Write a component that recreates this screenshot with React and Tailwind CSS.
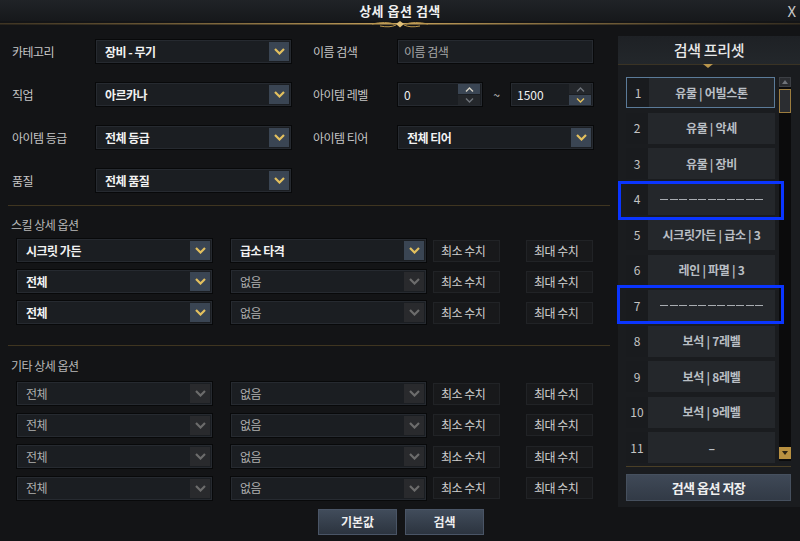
import React from "react";

const Chev = ({ color = "#e3c05e", up = false, small = false }) =>
  small ? (
    <svg width="9" height="5" viewBox="0 0 9 5">
      <path d={up ? "M1 4.5 L4.5 1 L8 4.5" : "M1 0.5 L4.5 4 L8 0.5"} fill="none" stroke={color} strokeWidth="1.4" />
    </svg>
  ) : (
    <svg width="11" height="7" viewBox="0 0 11 7">
      <path d={up ? "M1 6 L5.5 1.5 L10 6" : "M1 1 L5.5 5.5 L10 1"} fill="none" stroke={color} strokeWidth="2.2" />
    </svg>
  );

function Select({ text, active, bold }) {
  return (
    <div className="flex h-[23px] w-[195px] shrink-0 items-center justify-between border border-[#262a30] bg-[#1b1e22] pl-[8px] pr-[1px] shadow-[0_0_0_1px_#08090a]">
      <span className={bold ? "text-[12px] font-bold tracking-[-0.5px] text-[#f2f2f2]" : "text-[12px] tracking-[-0.5px] text-[#b0b0b0]"}>{text}</span>
      <div className={active ? "flex h-[19px] w-[20px] items-center justify-center bg-[#3a4553]" : "flex h-[19px] w-[20px] items-center justify-center bg-[#292a2d]"}>
        <Chev color={active ? "#e3c05e" : "#6c6c6c"} />
      </div>
    </div>
  );
}

function Spin({ value, wide, hl }) {
  return (
    <div className={(wide ? "w-[84px]" : "w-[82px]") + " flex h-[23px] items-center justify-between border border-[#262a30] bg-[#1b1e22] pl-[5px] pr-[1px] shadow-[0_0_0_1px_#08090a]"}>
      <span className="text-[12px] text-[#f0f0f0]">{value}</span>
      <div className="flex h-[21px] w-[22px] flex-col gap-[1px]">
        <div className={hl === "up" ? "flex flex-1 items-center justify-center bg-[#3a4553]" : "flex flex-1 items-center justify-center bg-[#24272b]"}>
          <Chev small up color={hl === "up" ? "#d6d2c4" : "#6e737a"} />
        </div>
        <div className={hl === "down" ? "flex flex-1 items-center justify-center bg-[#3a4553]" : "flex flex-1 items-center justify-center bg-[#24272b]"}>
          <Chev small color={hl === "down" ? "#e3c05e" : "#6e737a"} />
        </div>
      </div>
    </div>
  );
}

const Label = ({ children }) => <div className="text-[12px] tracking-[-0.5px] text-[#c6c6c6]">{children}</div>;

const Box = ({ children, ml }) => (
  <div className={ml + " flex h-[22px] w-[67px] shrink-0 items-center border border-[#212326] bg-[#18191b] pl-[7px] text-[12px] tracking-[-0.5px] text-[#cfcfcf]"}>
    {children}
  </div>
);

function OptRow({ a, b, aActive = false, bActive = false }) {
  return (
    <div className="flex items-center pl-[17px]">
      <Select text={a} active={aActive} bold={aActive} />
      <div className="ml-[19px]">
        <Select text={b} active={bActive} bold={bActive} />
      </div>
      <Box ml="ml-[7px]">최소 수치</Box>
      <Box ml="ml-[26px]">최대 수치</Box>
    </div>
  );
}

const presets = [
  "유물 | 어빌스톤",
  "유물 | 악세",
  "유물 | 장비",
  "DASH",
  "시크릿가든 | 급소 | 3",
  "레인 | 파멸 | 3",
  "DASH",
  "보석 | 7레벨",
  "보석 | 8레벨",
  "보석 | 9레벨",
  "–",
];

const Divider = () => <div className="mx-[8px] h-px bg-[#3f3520]" />;

export default function App() {
  return (
    <div className="relative h-[541px] w-[800px] overflow-hidden bg-[#131416] font-['Noto_Sans_CJK_KR','Noto_Sans',sans-serif]">
      {/* title bar */}
      <div className="relative flex h-[21px] items-center justify-center bg-gradient-to-b from-[#202327] to-[#16181b]">
        <span className="text-[13px] font-bold tracking-[0.5px] text-[#f0f0f0]">상세 옵션 검색</span>
        <span className="absolute right-[4px] top-[0px] text-[15px] text-[#c8c8c8]">X</span>
      </div>
      <svg width="800" height="8" viewBox="0 0 800 8" className="block">
        <defs>
          <linearGradient id="gl" x1="0" x2="1" y1="0" y2="0">
            <stop offset="0" stopColor="#6a5530" stopOpacity="0.5" />
            <stop offset="0.5" stopColor="#c9a45c" />
            <stop offset="1" stopColor="#6a5530" stopOpacity="0.4" />
          </linearGradient>
        </defs>
        <rect x="0" y="2" width="800" height="1.5" fill="url(#gl)" />
        <path d="M372 3 Q386 0 394 3 M428 3 Q414 0 406 3 M380 5 Q390 7 396 4 M420 5 Q410 7 404 4" stroke="#b8954c" strokeWidth="1" fill="none" />
        <path d="M400 0 L404 3 L400 6.5 L396 3 Z" fill="#e0c078" />
      </svg>

      <div className="flex">
        {/* left column */}
        <div className="w-[618px] shrink-0">
          <div className="mt-[11px] grid grid-cols-[84px_195px_22px_85px_195px] items-center gap-y-[20px] pl-[12px]">
            <Label>카테고리</Label>
            <Select text="장비 - 무기" active bold />
            <div />
            <Label>이름 검색</Label>
            <div className="flex h-[23px] w-[195px] items-center border border-[#262a30] bg-[#1b1e22] pl-[5px] text-[12px] tracking-[-0.5px] text-[#a8a8a8] shadow-[0_0_0_1px_#08090a]">
              이름 검색
            </div>

            <Label>직업</Label>
            <Select text="아르카나" active bold />
            <div />
            <Label>아이템 레벨</Label>
            <div className="flex items-center">
              <Spin value="0" wide hl="up" />
              <span className="w-[29px] text-center text-[12px] text-[#c8c8c8]">~</span>
              <Spin value="1500" hl="down" />
            </div>

            <Label>아이템 등급</Label>
            <Select text="전체 등급" active bold />
            <div />
            <Label>아이템 티어</Label>
            <Select text="전체 티어" active bold />

            <Label>품질</Label>
            <Select text="전체 품질" active bold />
            <div />
            <div />
            <div />
          </div>

          <div className="mt-[13px]">
            <Divider />
          </div>
          <div className="mt-[10px] pl-[11px] text-[12px] tracking-[-0.5px] text-[#b9b9b9]">스킬 상세 옵션</div>
          <div className="mt-[5px] flex flex-col gap-[8px]">
            <OptRow a="시크릿 가든" b="급소 타격" aActive bActive />
            <OptRow a="전체" b="없음" aActive />
            <OptRow a="전체" b="없음" aActive />
          </div>

          <div className="mt-[21px]">
            <Divider />
          </div>
          <div className="mt-[11px] pl-[11px] text-[12px] tracking-[-0.5px] text-[#b9b9b9]">기타 상세 옵션</div>
          <div className="mt-[7px] flex flex-col gap-[8.5px]">
            <OptRow a="전체" b="없음" />
            <OptRow a="전체" b="없음" />
            <OptRow a="전체" b="없음" />
            <OptRow a="전체" b="없음" />
          </div>

          <div className="ml-[318px] mt-[9px] flex gap-[8px]">
            <button className="h-[26px] w-[79px] border border-[#4a5566] bg-gradient-to-b from-[#414c5b] to-[#2c343f] text-[12px] font-bold text-[#eeeeee]">기본값</button>
            <button className="h-[26px] w-[79px] border border-[#4a5566] bg-gradient-to-b from-[#414c5b] to-[#2c343f] text-[12px] font-bold text-[#eeeeee]">검색</button>
          </div>
        </div>

        {/* right panel */}
        <div className="mt-[7px] h-[471px] w-[182px] shrink-0 bg-[#1a1c1f] pl-[8px] pr-[9px]">
          <div className="-ml-[8px] -mr-[9px] flex h-[28px] items-center justify-center bg-gradient-to-b from-[#1e2125] to-[#23272b] text-[15px] font-medium tracking-[-0.3px] text-[#e8e8e8]">
            검색 프리셋
          </div>
          <svg width="182" height="6" viewBox="0 0 182 6" className="-ml-[8px] block">
            <rect x="0" y="0" width="182" height="1" fill="#3a3324" />
            <path d="M85 0 L90 4 L95 0 Z" fill="#b8954c" />
          </svg>
          <div className="relative mt-[7px] flex gap-[4px]">
            <div className="flex w-[149px] flex-col gap-[4.5px]">
              {presets.map((p, i) => (
                <div key={i} className={i === 0 ? "flex h-[31px] border border-[#5b7b99] bg-[#24272b]" : "flex h-[31px] bg-[#24272b]"}>
                  <div className="flex w-[22px] items-center justify-center bg-[#191b1e] text-[12px] text-[#c4c4c4]">{i + 1}</div>
                  {p === "DASH" ? (
                    <div className="flex flex-1 items-center justify-center gap-[1.5px]">
                      {Array.from({ length: 11 }).map((_, k) => (
                        <div key={k} className="h-px w-[8px] bg-[#a9adb2]" />
                      ))}
                    </div>
                  ) : (
                    <div className="flex flex-1 items-center justify-center text-[12px] font-bold tracking-[-0.3px] text-[#b9bec4]">
                      {p}
                    </div>
                  )}
                </div>
              ))}
            </div>
            <div className="flex h-[384px] w-[12px] flex-col bg-[#0b0b0c]">
              <div className="flex h-[10px] items-center justify-center border border-[#3c3f44] bg-[#2a2c30]">
                <svg width="6" height="4" viewBox="0 0 6 4"><path d="M3 0 L6 4 L0 4 Z" fill="#70747a" /></svg>
              </div>
              <div className="mt-[2px] h-[24px] border border-[#9c7c3e] bg-[#2b2d31]" />
              <div className="flex-1" />
              <div className="mb-[2px] flex h-[12px] items-center justify-center bg-[#b89040]">
                <svg width="6" height="4" viewBox="0 0 6 4"><path d="M0 0 L6 0 L3 4 Z" fill="#2a2214" /></svg>
              </div>
            </div>
            <div className="pointer-events-none absolute left-[-8px] top-[104px] h-[39px] w-[166px] border-[3px] border-[#0a35ff]" />
            <div className="pointer-events-none absolute left-[-9px] top-[208px] h-[39px] w-[167px] border-[3px] border-[#0a35ff]" />
          </div>
          <div className="mt-[3px] h-px bg-[#4a3f26]" />
          <button className="mt-[7px] h-[27px] w-[165px] border border-[#46505e] bg-gradient-to-b from-[#3f4957] to-[#323a46] text-[13px] font-bold tracking-[-0.5px] text-[#f0f0f0]">
            검색 옵션 저장
          </button>
        </div>
      </div>
    </div>
  );
}
